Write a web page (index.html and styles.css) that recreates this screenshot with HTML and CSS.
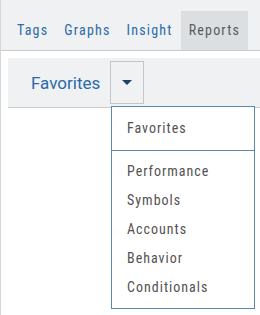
FILE: index.html
```html
<html>
<head>
<title>Reports</title>
<link rel="stylesheet" href="styles.css">
</head>
<body>

<div id="page">
<div class="tabbar">
  <a class="tab">Tags</a>
  <a class="tab">Graphs</a>
  <a class="tab">Insight</a>
  <a class="tab active">Reports</a>
</div>

<div class="content">
  <div class="toolbar">
    <span class="title">Favorites</span>
    <div class="dropdown">
      <div class="toggle"><span class="caret"></span></div>
      <div class="menu">
        <div class="section first">
          <div class="item">Favorites</div>
        </div>
        <div class="section">
          <div class="item">Performance</div>
          <div class="item">Symbols</div>
          <div class="item">Accounts</div>
          <div class="item">Behavior</div>
          <div class="item">Conditionals</div>
        </div>
      </div>
    </div>
  </div>
</div>
</div> <!-- End of "page" -->

</body>
</html>
```

FILE: styles.css
```css
body {
  margin: 0;
  font-family: Roboto, "Liberation Sans", sans-serif;
  font-stretch: 85%;
}
div#page {
  height: 315px;
  border-left: 1px solid #d4d6d8;
  box-sizing: border-box;
}
div.tabbar {
  display: flex;
  padding: 11px 0 0 8px;
  background-color: #eff1f3;
  border-bottom: 1px solid #c9cbcd;
}
a.tab {
  display: block;
  height: 39px;
  line-height: 39px;
  padding: 0 8px;
  font-size: 14px;
  letter-spacing: 1.2px;
  color: #2c6aa8;
}
a.tab.active {
  background-color: #dcdfe2;
  color: #5a5a5c;
}
div.content {
  padding: 7px 0 0 7px;
}
div.toolbar {
  display: flex;
  align-items: center;
  height: 49px;
  background-color: #eff1f3;
  border-bottom: 1px solid #c8cacc;
}
span.title {
  width: 64px;
  margin-left: 23px;
  font-size: 17px;
  font-stretch: 92%;
  color: #2b69a8;
}
div.dropdown {
  position: relative;
  margin-left: 15px;
}
div.toggle {
  display: flex;
  align-items: center;
  justify-content: center;
  width: 32px;
  height: 41px;
  border: 1px solid #c5c7c9;
}
span.caret {
  width: 0;
  height: 0;
  border-left: 5px solid transparent;
  border-right: 5px solid transparent;
  border-top: 5px solid #1d3f68;
}
div.menu {
  position: absolute;
  left: 1px;
  top: 45px;
  width: 142px;
  background-color: #fff;
  border: 1px solid #5b88b3;
}
div.section {
  padding: 6px 0;
}
div.section.first {
  padding: 7px 0;
  border-bottom: 1px solid #5b88b3;
}
div.item {
  height: 29px;
  line-height: 29px;
  padding-left: 15px;
  font-size: 14px;
  letter-spacing: 1px;
  color: #545150;
}
```
